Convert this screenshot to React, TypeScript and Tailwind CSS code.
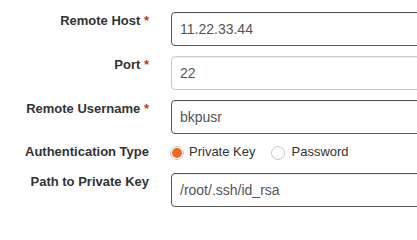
import React from "react";

const font = "font-['Liberation_Sans',Arial,Helvetica,sans-serif]";

function Label({ text, required }: { text: string; required?: boolean }) {
  return (
    <div className="w-[149px] shrink-0 text-right text-[13px] font-bold leading-[17px] text-[#333]">
      {text}
      {required && <span className="text-[#c9302c]"> *</span>}
    </div>
  );
}

function Input({ value, light }: { value: string; light?: boolean }) {
  return (
    <div
      className={`ml-px flex h-[34px] w-[270px] shrink-0 items-center rounded-[4px] border bg-white pl-2 text-[14px] text-[#555] shadow-[inset_0_1px_1px_rgba(0,0,0,0.075)] ${
        light ? "border-[#ccc]" : "border-[#555]"
      }`}
    >
      {value}
    </div>
  );
}

function Radio({ checked }: { checked?: boolean }) {
  return (
    <div className="mt-[3px] flex h-[14px] w-[14px] shrink-0 items-center justify-center rounded-full border border-[#c8c8c8] bg-white">
      {checked && <div className="h-[10px] w-[10px] rounded-full bg-[#f26722]" />}
    </div>
  );
}

export default function App() {
  return (
    <div className={`h-[214px] w-[417px] overflow-hidden bg-white pt-[12px] ${font}`}>
      <div className="flex flex-col">
        <div className="mb-[10px] flex items-start">
          <Label text="Remote Host" required />
          <div className="ml-[21px] flex">
            <Input value="11.22.33.44" />
          </div>
        </div>
        <div className="mb-[10px] flex items-start">
          <Label text="Port" required />
          <div className="ml-[21px] flex">
            <Input value="22" light />
          </div>
        </div>
        <div className="mb-[9px] flex items-start">
          <Label text="Remote Username" required />
          <div className="ml-[21px] flex">
            <Input value="bkpusr" />
          </div>
        </div>
        <div className="mb-[10px] flex h-[20px] items-start">
          <Label text="Authentication Type" />
          <div className="ml-[21px] flex items-start text-[13px] leading-[17px] text-[#333]">
            <Radio checked />
            <span className="ml-[5px]">Private Key</span>
            <div className="ml-[16px] flex items-start">
              <Radio />
            </div>
            <span className="ml-[6px]">Password</span>
          </div>
        </div>
        <div className="flex items-start">
          <Label text="Path to Private Key" />
          <div className="ml-[21px] flex">
            <Input value="/root/.ssh/id_rsa" />
          </div>
        </div>
      </div>
    </div>
  );
}
